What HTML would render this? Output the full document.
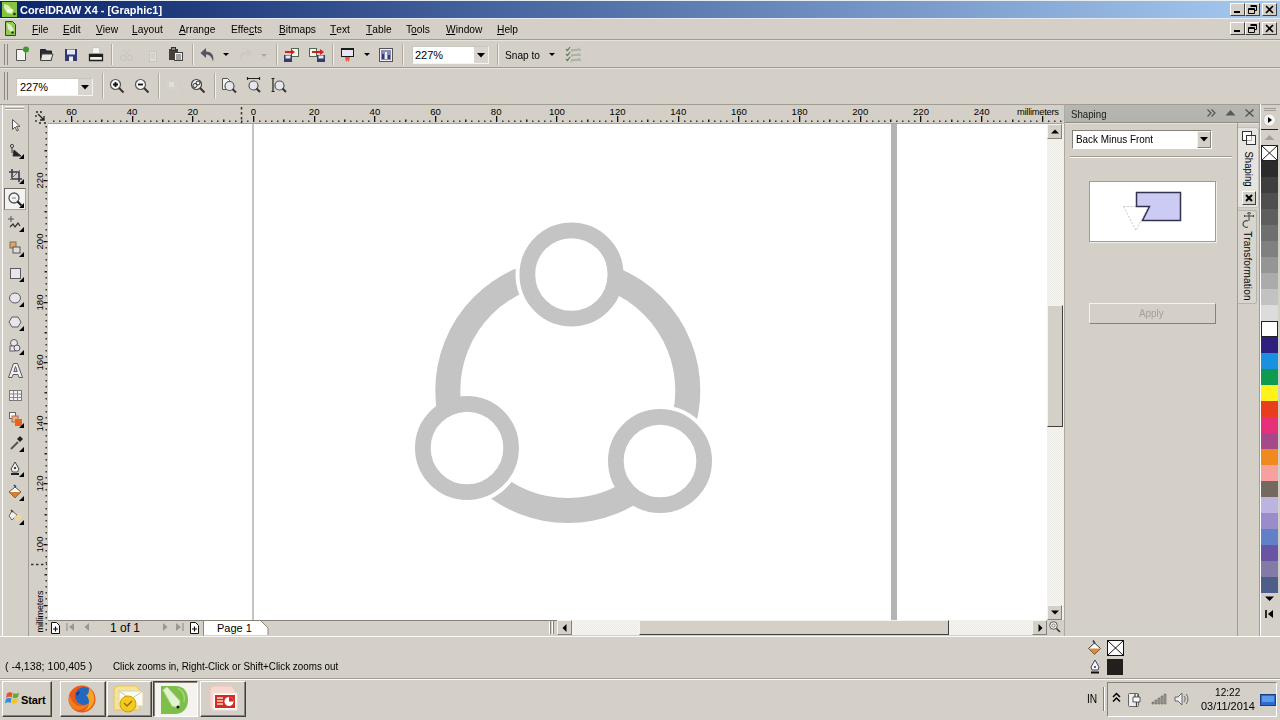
<!DOCTYPE html>
<html><head><meta charset="utf-8">
<style>
*{margin:0;padding:0;box-sizing:border-box}
html,body{width:1280px;height:720px;overflow:hidden;background:#d4d0c8;font-family:"Liberation Sans",sans-serif;font-size:11px;color:#000}
.a{position:absolute}
.t{position:absolute;white-space:nowrap;font-size:11px;line-height:13px}
u{text-decoration:none;position:relative}
u:after{content:"";position:absolute;left:0;right:0;bottom:0px;height:1px;background:#000}
.sep{position:absolute;width:2px;border-left:1px solid #aeaaa2;border-right:1px solid #f2f0eb}
.grip{position:absolute;width:4px;border-left:1px solid #8a877f;border-right:1px solid #8a877f}
svg{position:absolute;overflow:visible}
.hl{position:absolute;left:0;width:1280px;height:1px}
</style></head><body>
<!-- ===== title bar ===== -->
<div class="hl" style="top:0;background:#e6eef2"></div>
<div class="a" style="left:0;top:1px;width:1280px;height:17px;background:linear-gradient(90deg,#0a246a 0%,#a6caf0 100%)"></div>
<svg style="left:1px;top:1px" width="17" height="17" viewBox="0 0 17 17"><rect x="0.5" y="0.5" width="16" height="16" fill="#86c43e" stroke="#1e3318"/><path d="M3 3l4 1 5 5-1 4-5-1-3-5z" fill="#d6eeb0"/><path d="M6 9c2 1 4 1 6 0" stroke="#f4faea" stroke-width="2.5" fill="none"/><circle cx="13.5" cy="13" r="1.3" fill="#1e3318"/></svg>
<div class="t" style="left:20px;top:3px;font-weight:bold;color:#fff;font-size:11.5px;line-height:15px;transform-origin:0 0;transform:scaleX(0.95)">CorelDRAW X4 - [Graphic1]</div>
<!-- title buttons -->
<div class="a" style="left:1230px;top:3px;width:15px;height:13px;background:#d4d0c8;border:1px solid;border-color:#fff #404040 #404040 #fff"></div>
<div class="a" style="left:1245px;top:3px;width:15px;height:13px;background:#d4d0c8;border:1px solid;border-color:#fff #404040 #404040 #fff"></div>
<div class="a" style="left:1262px;top:3px;width:15px;height:13px;background:#d4d0c8;border:1px solid;border-color:#fff #404040 #404040 #fff"></div>
<div class="a" style="left:1234px;top:11px;width:6px;height:2px;background:#000"></div>
<svg style="left:1245px;top:3px" width="15" height="13"><path d="M5.5 2.5h6v5h-2M5.5 3.5h6M3.5 5.5h6v5h-6z M3.5 6.5h6" fill="none" stroke="#000"/></svg>
<svg style="left:1262px;top:3px" width="15" height="13"><path d="M4 3L11 10M11 3L4 10" stroke="#000" stroke-width="1.6"/></svg>
<!-- ===== menu ===== -->
<div class="hl" style="top:18px;background:#e8e8f2"></div>
<svg style="left:4px;top:20px" width="13" height="17" viewBox="0 0 13 17"><path d="M1.5 1.5h7l3 3v11h-10z" fill="#94c856" stroke="#2e4a1e"/><path d="M3 3l4 2 3 5-2 3-4-4z" fill="#dcefc0"/><circle cx="8.5" cy="12.5" r="1.2" fill="#1e2e14"/></svg>
<div class="t" style="left:32px;top:23px;transform-origin:0 0;transform:scaleX(0.93)"><u>F</u>ile</div>
<div class="t" style="left:63px;top:23px;transform-origin:0 0;transform:scaleX(0.93)"><u>E</u>dit</div>
<div class="t" style="left:96px;top:23px;transform-origin:0 0;transform:scaleX(0.93)"><u>V</u>iew</div>
<div class="t" style="left:132px;top:23px;transform-origin:0 0;transform:scaleX(0.93)"><u>L</u>ayout</div>
<div class="t" style="left:179px;top:23px;transform-origin:0 0;transform:scaleX(0.93)"><u>A</u>rrange</div>
<div class="t" style="left:231px;top:23px;transform-origin:0 0;transform:scaleX(0.93)">Effe<u>c</u>ts</div>
<div class="t" style="left:279px;top:23px;transform-origin:0 0;transform:scaleX(0.93)"><u>B</u>itmaps</div>
<div class="t" style="left:330px;top:23px;transform-origin:0 0;transform:scaleX(0.93)"><u>T</u>ext</div>
<div class="t" style="left:366px;top:23px;transform-origin:0 0;transform:scaleX(0.93)"><u>T</u>able</div>
<div class="t" style="left:406px;top:23px;transform-origin:0 0;transform:scaleX(0.93)">T<u>o</u>ols</div>
<div class="t" style="left:446px;top:23px;transform-origin:0 0;transform:scaleX(0.93)"><u>W</u>indow</div>
<div class="t" style="left:497px;top:23px;transform-origin:0 0;transform:scaleX(0.93)"><u>H</u>elp</div>
<!-- mdi buttons -->
<div class="a" style="left:1230px;top:22px;width:15px;height:13px;background:#d4d0c8;border:1px solid;border-color:#fff #404040 #404040 #fff"></div>
<div class="a" style="left:1245px;top:22px;width:15px;height:13px;background:#d4d0c8;border:1px solid;border-color:#fff #404040 #404040 #fff"></div>
<div class="a" style="left:1262px;top:22px;width:15px;height:13px;background:#d4d0c8;border:1px solid;border-color:#fff #404040 #404040 #fff"></div>
<div class="a" style="left:1234px;top:30px;width:6px;height:2px;background:#000"></div>
<svg style="left:1245px;top:22px" width="15" height="13"><path d="M5.5 2.5h6v5h-2M5.5 3.5h6M3.5 5.5h6v5h-6z M3.5 6.5h6" fill="none" stroke="#000"/></svg>
<svg style="left:1262px;top:22px" width="15" height="13"><path d="M4 3L11 10M11 3L4 10" stroke="#000" stroke-width="1.6"/></svg>
<div class="hl" style="top:39px;background:#a19d95"></div>
<div class="hl" style="top:40px;background:#e6e3dd"></div>
<!-- ===== toolbar 1 ===== -->
<div class="grip" style="left:4px;top:44px;height:21px"></div>
<!-- new -->
<svg style="left:15px;top:46px" width="16" height="16" viewBox="0 0 16 16"><path d="M1.5 3.5h6l3 3v8h-9z" fill="#f4f4f0" stroke="#555"/><circle cx="11" cy="3.5" r="3" fill="#3d9a2c"/></svg>
<!-- open -->
<svg style="left:39px;top:46px" width="16" height="16" viewBox="0 0 16 16"><path d="M1.5 3.5h5l1 1.5h5v9h-11z" fill="#2b2e3a" stroke="#222"/><path d="M3 8h11l-2 6.5H1.5z" fill="#e9e7e0" stroke="#444"/></svg>
<!-- save -->
<svg style="left:64px;top:47px" width="16" height="16" viewBox="0 0 16 16"><rect x="1" y="2" width="12" height="12" fill="#323a73"/><rect x="3" y="2.5" width="8" height="5" fill="#e8e8f4"/><rect x="5" y="9.5" width="4" height="4.5" fill="#eee"/></svg>
<!-- print -->
<svg style="left:88px;top:46px" width="16" height="16" viewBox="0 0 16 16"><rect x="4.5" y="1.5" width="7" height="6" fill="#f4f4ee" stroke="#c9c9c0"/><path d="M1.5 8.5h13v6h-13z" fill="#f2f0e6" stroke="#1e1e1e" stroke-width="1.3"/><rect x="2" y="9" width="12" height="2" fill="#1e1e1e"/></svg>
<div class="sep" style="left:111px;top:44px;height:21px"></div>
<!-- cut disabled -->
<svg style="left:119px;top:47px" width="16" height="16" viewBox="0 0 16 16"><circle cx="4" cy="11" r="2.5" fill="none" stroke="#c8c5bd" stroke-width="1.2"/><circle cx="11" cy="11" r="2.5" fill="none" stroke="#c8c5bd" stroke-width="1.2"/><path d="M5 9L11 2M10 9L4 2" stroke="#c8c5bd"/></svg>
<!-- copy disabled -->
<svg style="left:145px;top:47px" width="16" height="16" viewBox="0 0 16 16"><rect x="4.5" y="4.5" width="7" height="10" fill="#e0ddd6" stroke="#c8c5bd"/><path d="M6 7h4M6 9h4M6 11h4" stroke="#c8c5bd"/></svg>
<!-- paste -->
<svg style="left:168px;top:46px" width="16" height="16" viewBox="0 0 16 16"><rect x="1" y="3" width="9" height="11" fill="#4a3f34"/><rect x="3.5" y="1.5" width="4" height="3" fill="#8d8173" stroke="#333"/><rect x="6.5" y="6.5" width="8" height="8" fill="#f4f4ef" stroke="#444"/><path d="M8 9h5M8 11h5M8 13h5" stroke="#555"/></svg>
<div class="sep" style="left:192px;top:44px;height:21px"></div>
<!-- undo -->
<svg style="left:199px;top:46px" width="17" height="17" viewBox="0 0 17 17"><path d="M14 15.5C15.5 10 13 5.5 7 5.5V2L1.5 7 7 12V8.5c3.5 0 5.5 2 7 7z" fill="#55555f"/></svg>
<svg style="left:223px;top:53px" width="6" height="4"><path d="M0 0h6L3 3z" fill="#000"/></svg>
<!-- redo disabled -->
<svg style="left:237px;top:46px" width="17" height="17" viewBox="0 0 17 17"><path d="M3 15.5C1.5 10 4 5.5 10 5.5V2l5.5 5L10 12V8.5c-3.5 0-5.5 2-7 7z" fill="#cdcac2"/></svg>
<svg style="left:261px;top:54px" width="6" height="4"><path d="M0 0h6L3 3z" fill="#aaa69e"/></svg>
<div class="sep" style="left:276px;top:44px;height:21px"></div>
<!-- import -->
<svg style="left:283px;top:47px" width="18" height="16" viewBox="0 0 18 16"><rect x="8.5" y="1.5" width="7" height="8" fill="#f5f5f0" stroke="#4d6a4d"/><path d="M2 5h8" stroke="#d81e1e" stroke-width="2"/><path d="M8 2l4 3-4 3z" fill="#d81e1e"/><rect x="1" y="8" width="8" height="7" fill="#363b6e"/><rect x="2.5" y="8.5" width="5" height="3" fill="#e6e6f0"/></svg>
<!-- export -->
<svg style="left:308px;top:47px" width="18" height="16" viewBox="0 0 18 16"><rect x="1.5" y="1.5" width="7" height="8" fill="#f5f5f0" stroke="#4d6a4d"/><path d="M4 5h8" stroke="#d81e1e" stroke-width="2"/><path d="M12 2l4 3-4 3z" fill="#d81e1e"/><rect x="9" y="8" width="8" height="7" fill="#363b6e"/><rect x="10.5" y="8.5" width="5" height="3" fill="#e6e6f0"/></svg>
<div class="sep" style="left:332px;top:44px;height:21px"></div>
<!-- publish pdf -->
<svg style="left:340px;top:46px" width="16" height="17" viewBox="0 0 16 17"><rect x="1" y="2" width="13" height="9" fill="#1a1a1a"/><rect x="2" y="4" width="11" height="6" fill="#e8e6f4"/><path d="M5 11h5l-1 5-1.5-2L6 16z" fill="#f05a3c"/></svg>
<svg style="left:364px;top:53px" width="6" height="4"><path d="M0 0h6L3 3z" fill="#000"/></svg>
<!-- app launcher -->
<svg style="left:378px;top:47px" width="16" height="16" viewBox="0 0 16 16"><rect x="1.5" y="1.5" width="13" height="13" fill="#f0eff5" stroke="#555"/><rect x="3" y="3" width="10" height="10" fill="#8a8cb8"/><rect x="4" y="7" width="2" height="5" fill="#333a70"/><rect x="7" y="5" width="2" height="7" fill="#eee"/><rect x="10" y="8" width="2" height="4" fill="#333a70"/></svg>
<div class="sep" style="left:402px;top:44px;height:21px"></div>
<!-- zoom combo -->
<div class="a" style="left:412px;top:46px;width:77px;height:18px;background:#fff;border:1px solid;border-color:#c9c6be #f4f3ef #f4f3ef #c9c6be"></div>
<div class="a" style="left:474px;top:47px;width:14px;height:16px;background:#d8d5ce"></div>
<svg style="left:477px;top:53px" width="8" height="5"><path d="M0 0h8L4 4.5z" fill="#000"/></svg>
<div class="t" style="left:415px;top:49px;font-size:11px">227%</div>
<div class="sep" style="left:497px;top:44px;height:21px"></div>
<div class="t" style="left:505px;top:49px;transform-origin:0 0;transform:scaleX(0.92)">Snap to</div>
<svg style="left:549px;top:53px" width="6" height="4"><path d="M0 0h6L3 3z" fill="#000"/></svg>
<svg style="left:565px;top:46px" width="17" height="17" viewBox="0 0 17 17"><path d="M1 3l1.5 1.5L5 1M1 8l1.5 1.5L5 6M1 13l1.5 1.5L5 11" fill="none" stroke="#5d7a5d" stroke-width="1.2"/><path d="M6 4h10M6 9h10M6 14h10" stroke="#8a9a8a" stroke-width="1"/><path d="M5 6l10-4M5 11l10-4M5 16l10-4" stroke="#a7b3a7" stroke-width="0.8"/></svg>
<div class="hl" style="top:67px;background:#a19d95"></div>
<div class="hl" style="top:68px;background:#e6e3dd"></div>
<!-- ===== toolbar 2 ===== -->
<div class="grip" style="left:4px;top:72px;height:28px"></div>
<div class="a" style="left:16px;top:78px;width:77px;height:18px;background:#fff;border:1px solid;border-color:#c9c6be #f4f3ef #f4f3ef #c9c6be"></div>
<div class="a" style="left:78px;top:79px;width:14px;height:16px;background:#d8d5ce"></div>
<svg style="left:81px;top:85px" width="8" height="5"><path d="M0 0h8L4 4.5z" fill="#000"/></svg>
<div class="t" style="left:20px;top:81px;font-size:11px">227%</div>
<div class="sep" style="left:102px;top:73px;height:26px"></div>
<!-- zoom in -->
<svg style="left:109px;top:78px" width="16" height="16" viewBox="0 0 16 16"><circle cx="6.5" cy="6.5" r="5" fill="#f6f6f6" stroke="#555" stroke-width="1.2"/><path d="M4 6.5h5M6.5 4v5" stroke="#111" stroke-width="1.8"/><path d="M10 10l4.5 4.5" stroke="#333" stroke-width="2"/></svg>
<svg style="left:134px;top:78px" width="16" height="16" viewBox="0 0 16 16"><circle cx="6.5" cy="6.5" r="5" fill="#f6f6f6" stroke="#555" stroke-width="1.2"/><path d="M4 6.5h5" stroke="#111" stroke-width="1.8"/><path d="M10 10l4.5 4.5" stroke="#333" stroke-width="2"/></svg>
<div class="sep" style="left:158px;top:73px;height:26px"></div>
<svg style="left:165px;top:78px" width="16" height="16" viewBox="0 0 16 16"><circle cx="6.5" cy="6.5" r="5" fill="none" stroke="#d6d3cc" stroke-width="1.2"/><rect x="4" y="4" width="5" height="5" fill="#e2dfd8"/><path d="M10 10l4.5 4.5" stroke="#d6d3cc" stroke-width="2"/></svg>
<svg style="left:190px;top:78px" width="16" height="16" viewBox="0 0 16 16"><circle cx="6.5" cy="6.5" r="5" fill="#f2f2f2" stroke="#444" stroke-width="1.2"/><circle cx="5" cy="7.5" r="2" fill="none" stroke="#333"/><circle cx="8" cy="5" r="2" fill="none" stroke="#333"/><path d="M10 10l4.5 4.5" stroke="#333" stroke-width="2"/></svg>
<div class="sep" style="left:214px;top:73px;height:26px"></div>
<svg style="left:221px;top:77px" width="16" height="17" viewBox="0 0 16 17"><path d="M1.5 1.5h5l2 2v9h-7z" fill="#f4f4f0" stroke="#555"/><circle cx="8.5" cy="9" r="4.5" fill="#e6e6ee" stroke="#555" stroke-width="1.2"/><path d="M11.5 12l3.5 3.5" stroke="#333" stroke-width="2"/></svg>
<svg style="left:246px;top:77px" width="16" height="17" viewBox="0 0 16 17"><path d="M1 1.5h13M1.5 0v3M13.5 0v3" stroke="#222" stroke-width="1.2"/><circle cx="7.5" cy="8.5" r="4.5" fill="#e6e6ee" stroke="#555" stroke-width="1.2"/><path d="M10.5 11.5l3.5 3.5" stroke="#333" stroke-width="2"/></svg>
<svg style="left:271px;top:77px" width="16" height="17" viewBox="0 0 16 17"><path d="M2 1v14M0.5 1.5h3M0.5 14.5h3" stroke="#222" stroke-width="1.2"/><circle cx="8.5" cy="8.5" r="4.5" fill="#e6e6ee" stroke="#555" stroke-width="1.2"/><path d="M11.5 11.5l3.5 3.5" stroke="#333" stroke-width="2"/></svg>
<div class="hl" style="top:104px;background:#a19d95"></div>
<!-- ===== toolbox ===== -->
<div class="a" style="left:2px;top:105px;width:1px;height:531px;background:#fff"></div>
<div class="a" style="left:28px;top:105px;width:1px;height:531px;background:#a19d95"></div>
<div class="a" style="left:5px;top:106px;width:19px;height:1px;background:#f4f3ef"></div>
<div class="a" style="left:5px;top:108px;width:19px;height:1px;background:#a19d95"></div>
<div class="a" style="left:5px;top:109px;width:19px;height:1px;background:#f4f3ef"></div>
<svg style="left:7px;top:117px" width="17" height="17" viewBox="0 0 17 17"><path d="M5.5 2.5v10l2.5-2.5 2 4 1.5-.7-2-4H13z" fill="#fafafa" stroke="#555"/></svg>
<svg style="left:7px;top:142px" width="17" height="17" viewBox="0 0 17 17"><circle cx="5" cy="4" r="1.6" fill="none" stroke="#444"/><path d="M5 6v5M7 8l7 6H6z" stroke="#333" fill="#222"/></svg>
<svg style="left:19px;top:154px" width="5" height="5"><path d="M5 0v5H0z" fill="#000"/></svg>
<svg style="left:7px;top:167px" width="17" height="17" viewBox="0 0 17 17"><path d="M5 2v10h10M2 5h10v10" stroke="#3c3c4c" stroke-width="1.6" fill="none"/><path d="M3 13L13 3" stroke="#6a6a80"/></svg>
<svg style="left:19px;top:179px" width="5" height="5"><path d="M5 0v5H0z" fill="#000"/></svg>
<div class="a" style="left:4px;top:188px;width:22px;height:22px;background:#f4f3f0;border:1px solid;border-color:#6d6a63 #a9a69e #a9a69e #6d6a63"></div>
<svg style="left:7px;top:191px" width="17" height="17" viewBox="0 0 17 17"><circle cx="7" cy="7" r="5" fill="#f4f4f8" stroke="#555" stroke-width="1.3"/><path d="M5 7h4" stroke="#9aa" stroke-width="1.5"/><path d="M10.5 10.5l4 4" stroke="#222" stroke-width="2.2"/></svg>
<svg style="left:19px;top:203px" width="5" height="5"><path d="M5 0v5H0z" fill="#000"/></svg>
<svg style="left:7px;top:215px" width="17" height="17" viewBox="0 0 17 17"><path d="M4 1v6M1 4h6" stroke="#555"/><path d="M3 12l3-3 2 3 3-4 2 3" stroke="#333" stroke-width="1.3" fill="none"/></svg>
<svg style="left:19px;top:227px" width="5" height="5"><path d="M5 0v5H0z" fill="#000"/></svg>
<svg style="left:7px;top:240px" width="17" height="17" viewBox="0 0 17 17"><rect x="3" y="2" width="6" height="6" fill="#e9a070" stroke="#774"/><rect x="6" y="7" width="7" height="6" fill="#ddd" stroke="#555"/></svg>
<svg style="left:19px;top:252px" width="5" height="5"><path d="M5 0v5H0z" fill="#000"/></svg>
<svg style="left:7px;top:265px" width="17" height="17" viewBox="0 0 17 17"><rect x="3.5" y="3.5" width="10" height="10" fill="#e6e6ec" stroke="#5c5c60"/></svg>
<svg style="left:19px;top:277px" width="5" height="5"><path d="M5 0v5H0z" fill="#000"/></svg>
<svg style="left:7px;top:290px" width="17" height="17" viewBox="0 0 17 17"><ellipse cx="8" cy="8" rx="5.5" ry="5" fill="#e6e6ec" stroke="#5c5c60"/></svg>
<svg style="left:19px;top:302px" width="5" height="5"><path d="M5 0v5H0z" fill="#000"/></svg>
<svg style="left:7px;top:314px" width="17" height="17" viewBox="0 0 17 17"><path d="M5 3h6l3 5-3 5H5L2 8z" fill="#e6e6ec" stroke="#5c5c60"/></svg>
<svg style="left:19px;top:326px" width="5" height="5"><path d="M5 0v5H0z" fill="#000"/></svg>
<svg style="left:7px;top:338px" width="17" height="17" viewBox="0 0 17 17"><circle cx="7" cy="5" r="3.5" fill="#e6e6ec" stroke="#5c5c60"/><rect x="3" y="8" width="5" height="5" fill="#e6e6ec" stroke="#5c5c60"/><circle cx="10" cy="10" r="3" fill="#e6e6ec" stroke="#5c5c60"/></svg>
<svg style="left:19px;top:350px" width="5" height="5"><path d="M5 0v5H0z" fill="#000"/></svg>
<svg style="left:7px;top:362px" width="17" height="17" viewBox="0 0 17 17"><path d="M1.5 15.5L6.5 1.5h4l5 14h-3.5l-1-3h-5l-1 3zM6.8 9.5h3.4L8.5 4.5z" fill="#f2f2f4" stroke="#5a5a60" stroke-width="1" fill-rule="evenodd"/></svg>
<svg style="left:7px;top:387px" width="17" height="17" viewBox="0 0 17 17"><rect x="2.5" y="3.5" width="12" height="10" fill="#f4f4f8" stroke="#777"/><path d="M2.5 7h12M2.5 10.5h12M6.5 3.5v10M10.5 3.5v10" stroke="#888"/></svg>
<svg style="left:7px;top:411px" width="17" height="17" viewBox="0 0 17 17"><rect x="2.5" y="1.5" width="6" height="6" fill="#fff" stroke="#666"/><rect x="5" y="5" width="6" height="6" fill="#f0b070" stroke="#a66"/><rect x="8" y="8" width="7" height="7" fill="#e8641e"/></svg>
<svg style="left:19px;top:423px" width="5" height="5"><path d="M5 0v5H0z" fill="#000"/></svg>
<svg style="left:7px;top:435px" width="17" height="17" viewBox="0 0 17 17"><path d="M4 14l7-7" stroke="#555" stroke-width="2"/><path d="M10 4l3-3 3 3-3 3z" fill="#222"/></svg>
<svg style="left:19px;top:447px" width="5" height="5"><path d="M5 0v5H0z" fill="#000"/></svg>
<svg style="left:7px;top:460px" width="17" height="17" viewBox="0 0 17 17"><path d="M8 2l4 7-1.5 3h-5L4 9z" fill="#f2f2f8" stroke="#444"/><circle cx="8" cy="8" r="1.2" fill="#444"/><path d="M4 14h8" stroke="#222" stroke-width="2"/></svg>
<svg style="left:19px;top:472px" width="5" height="5"><path d="M5 0v5H0z" fill="#000"/></svg>
<svg style="left:7px;top:484px" width="17" height="17" viewBox="0 0 17 17"><path d="M8 3l6 5-6 6-6-6z" fill="#fff" stroke="#555"/><path d="M2 8h12l-6 6z" fill="#d77f2a"/><path d="M7 1l2 2" stroke="#335" stroke-width="1.5"/></svg>
<svg style="left:19px;top:496px" width="5" height="5"><path d="M5 0v5H0z" fill="#000"/></svg>
<svg style="left:7px;top:508px" width="17" height="17" viewBox="0 0 17 17"><path d="M5 3l5 4-5 5-3-4z" fill="#f0f0f0" stroke="#666"/><path d="M7 9l6-4 2 5-6 4z" fill="#e8d7a0"/><path d="M4 2l2 2" stroke="#533" stroke-width="1.5"/></svg>
<svg style="left:19px;top:520px" width="5" height="5"><path d="M5 0v5H0z" fill="#000"/></svg>
<!-- ===== rulers ===== -->
<svg style="left:0;top:104px" width="1064" height="21"><rect x="53" y="16.5" width="1.5" height="1.5" fill="#333"/><rect x="59" y="16.5" width="1.5" height="1.5" fill="#333"/><rect x="65" y="16.5" width="1.5" height="1.5" fill="#333"/><rect x="71" y="12" width="1.3" height="6" fill="#111"/><rect x="77" y="16.5" width="1.5" height="1.5" fill="#333"/><rect x="83" y="16.5" width="1.5" height="1.5" fill="#333"/><rect x="89" y="16.5" width="1.5" height="1.5" fill="#333"/><rect x="95" y="16.5" width="1.5" height="1.5" fill="#333"/><rect x="101" y="15.5" width="1.5" height="2.5" fill="#222"/><rect x="107" y="16.5" width="1.5" height="1.5" fill="#333"/><rect x="113" y="16.5" width="1.5" height="1.5" fill="#333"/><rect x="120" y="16.5" width="1.5" height="1.5" fill="#333"/><rect x="126" y="16.5" width="1.5" height="1.5" fill="#333"/><rect x="132" y="12" width="1.3" height="6" fill="#111"/><rect x="138" y="16.5" width="1.5" height="1.5" fill="#333"/><rect x="144" y="16.5" width="1.5" height="1.5" fill="#333"/><rect x="150" y="16.5" width="1.5" height="1.5" fill="#333"/><rect x="156" y="16.5" width="1.5" height="1.5" fill="#333"/><rect x="162" y="15.5" width="1.5" height="2.5" fill="#222"/><rect x="168" y="16.5" width="1.5" height="1.5" fill="#333"/><rect x="174" y="16.5" width="1.5" height="1.5" fill="#333"/><rect x="180" y="16.5" width="1.5" height="1.5" fill="#333"/><rect x="186" y="16.5" width="1.5" height="1.5" fill="#333"/><rect x="192" y="12" width="1.3" height="6" fill="#111"/><rect x="198" y="16.5" width="1.5" height="1.5" fill="#333"/><rect x="204" y="16.5" width="1.5" height="1.5" fill="#333"/><rect x="211" y="16.5" width="1.5" height="1.5" fill="#333"/><rect x="217" y="16.5" width="1.5" height="1.5" fill="#333"/><rect x="223" y="15.5" width="1.5" height="2.5" fill="#222"/><rect x="229" y="16.5" width="1.5" height="1.5" fill="#333"/><rect x="235" y="16.5" width="1.5" height="1.5" fill="#333"/><rect x="241" y="16.5" width="1.5" height="1.5" fill="#333"/><rect x="247" y="16.5" width="1.5" height="1.5" fill="#333"/><rect x="253" y="12" width="1.3" height="6" fill="#111"/><rect x="259" y="16.5" width="1.5" height="1.5" fill="#333"/><rect x="265" y="16.5" width="1.5" height="1.5" fill="#333"/><rect x="271" y="16.5" width="1.5" height="1.5" fill="#333"/><rect x="277" y="16.5" width="1.5" height="1.5" fill="#333"/><rect x="283" y="15.5" width="1.5" height="2.5" fill="#222"/><rect x="289" y="16.5" width="1.5" height="1.5" fill="#333"/><rect x="295" y="16.5" width="1.5" height="1.5" fill="#333"/><rect x="302" y="16.5" width="1.5" height="1.5" fill="#333"/><rect x="308" y="16.5" width="1.5" height="1.5" fill="#333"/><rect x="314" y="12" width="1.3" height="6" fill="#111"/><rect x="320" y="16.5" width="1.5" height="1.5" fill="#333"/><rect x="326" y="16.5" width="1.5" height="1.5" fill="#333"/><rect x="332" y="16.5" width="1.5" height="1.5" fill="#333"/><rect x="338" y="16.5" width="1.5" height="1.5" fill="#333"/><rect x="344" y="15.5" width="1.5" height="2.5" fill="#222"/><rect x="350" y="16.5" width="1.5" height="1.5" fill="#333"/><rect x="356" y="16.5" width="1.5" height="1.5" fill="#333"/><rect x="362" y="16.5" width="1.5" height="1.5" fill="#333"/><rect x="368" y="16.5" width="1.5" height="1.5" fill="#333"/><rect x="374" y="12" width="1.3" height="6" fill="#111"/><rect x="380" y="16.5" width="1.5" height="1.5" fill="#333"/><rect x="386" y="16.5" width="1.5" height="1.5" fill="#333"/><rect x="393" y="16.5" width="1.5" height="1.5" fill="#333"/><rect x="399" y="16.5" width="1.5" height="1.5" fill="#333"/><rect x="405" y="15.5" width="1.5" height="2.5" fill="#222"/><rect x="411" y="16.5" width="1.5" height="1.5" fill="#333"/><rect x="417" y="16.5" width="1.5" height="1.5" fill="#333"/><rect x="423" y="16.5" width="1.5" height="1.5" fill="#333"/><rect x="429" y="16.5" width="1.5" height="1.5" fill="#333"/><rect x="435" y="12" width="1.3" height="6" fill="#111"/><rect x="441" y="16.5" width="1.5" height="1.5" fill="#333"/><rect x="447" y="16.5" width="1.5" height="1.5" fill="#333"/><rect x="453" y="16.5" width="1.5" height="1.5" fill="#333"/><rect x="459" y="16.5" width="1.5" height="1.5" fill="#333"/><rect x="465" y="15.5" width="1.5" height="2.5" fill="#222"/><rect x="471" y="16.5" width="1.5" height="1.5" fill="#333"/><rect x="478" y="16.5" width="1.5" height="1.5" fill="#333"/><rect x="484" y="16.5" width="1.5" height="1.5" fill="#333"/><rect x="490" y="16.5" width="1.5" height="1.5" fill="#333"/><rect x="496" y="12" width="1.3" height="6" fill="#111"/><rect x="502" y="16.5" width="1.5" height="1.5" fill="#333"/><rect x="508" y="16.5" width="1.5" height="1.5" fill="#333"/><rect x="514" y="16.5" width="1.5" height="1.5" fill="#333"/><rect x="520" y="16.5" width="1.5" height="1.5" fill="#333"/><rect x="526" y="15.5" width="1.5" height="2.5" fill="#222"/><rect x="532" y="16.5" width="1.5" height="1.5" fill="#333"/><rect x="538" y="16.5" width="1.5" height="1.5" fill="#333"/><rect x="544" y="16.5" width="1.5" height="1.5" fill="#333"/><rect x="550" y="16.5" width="1.5" height="1.5" fill="#333"/><rect x="556" y="12" width="1.3" height="6" fill="#111"/><rect x="562" y="16.5" width="1.5" height="1.5" fill="#333"/><rect x="569" y="16.5" width="1.5" height="1.5" fill="#333"/><rect x="575" y="16.5" width="1.5" height="1.5" fill="#333"/><rect x="581" y="16.5" width="1.5" height="1.5" fill="#333"/><rect x="587" y="15.5" width="1.5" height="2.5" fill="#222"/><rect x="593" y="16.5" width="1.5" height="1.5" fill="#333"/><rect x="599" y="16.5" width="1.5" height="1.5" fill="#333"/><rect x="605" y="16.5" width="1.5" height="1.5" fill="#333"/><rect x="611" y="16.5" width="1.5" height="1.5" fill="#333"/><rect x="617" y="12" width="1.3" height="6" fill="#111"/><rect x="623" y="16.5" width="1.5" height="1.5" fill="#333"/><rect x="629" y="16.5" width="1.5" height="1.5" fill="#333"/><rect x="635" y="16.5" width="1.5" height="1.5" fill="#333"/><rect x="641" y="16.5" width="1.5" height="1.5" fill="#333"/><rect x="647" y="15.5" width="1.5" height="2.5" fill="#222"/><rect x="653" y="16.5" width="1.5" height="1.5" fill="#333"/><rect x="660" y="16.5" width="1.5" height="1.5" fill="#333"/><rect x="666" y="16.5" width="1.5" height="1.5" fill="#333"/><rect x="672" y="16.5" width="1.5" height="1.5" fill="#333"/><rect x="678" y="12" width="1.3" height="6" fill="#111"/><rect x="684" y="16.5" width="1.5" height="1.5" fill="#333"/><rect x="690" y="16.5" width="1.5" height="1.5" fill="#333"/><rect x="696" y="16.5" width="1.5" height="1.5" fill="#333"/><rect x="702" y="16.5" width="1.5" height="1.5" fill="#333"/><rect x="708" y="15.5" width="1.5" height="2.5" fill="#222"/><rect x="714" y="16.5" width="1.5" height="1.5" fill="#333"/><rect x="720" y="16.5" width="1.5" height="1.5" fill="#333"/><rect x="726" y="16.5" width="1.5" height="1.5" fill="#333"/><rect x="732" y="16.5" width="1.5" height="1.5" fill="#333"/><rect x="738" y="12" width="1.3" height="6" fill="#111"/><rect x="745" y="16.5" width="1.5" height="1.5" fill="#333"/><rect x="751" y="16.5" width="1.5" height="1.5" fill="#333"/><rect x="757" y="16.5" width="1.5" height="1.5" fill="#333"/><rect x="763" y="16.5" width="1.5" height="1.5" fill="#333"/><rect x="769" y="15.5" width="1.5" height="2.5" fill="#222"/><rect x="775" y="16.5" width="1.5" height="1.5" fill="#333"/><rect x="781" y="16.5" width="1.5" height="1.5" fill="#333"/><rect x="787" y="16.5" width="1.5" height="1.5" fill="#333"/><rect x="793" y="16.5" width="1.5" height="1.5" fill="#333"/><rect x="799" y="12" width="1.3" height="6" fill="#111"/><rect x="805" y="16.5" width="1.5" height="1.5" fill="#333"/><rect x="811" y="16.5" width="1.5" height="1.5" fill="#333"/><rect x="817" y="16.5" width="1.5" height="1.5" fill="#333"/><rect x="823" y="16.5" width="1.5" height="1.5" fill="#333"/><rect x="829" y="15.5" width="1.5" height="2.5" fill="#222"/><rect x="836" y="16.5" width="1.5" height="1.5" fill="#333"/><rect x="842" y="16.5" width="1.5" height="1.5" fill="#333"/><rect x="848" y="16.5" width="1.5" height="1.5" fill="#333"/><rect x="854" y="16.5" width="1.5" height="1.5" fill="#333"/><rect x="860" y="12" width="1.3" height="6" fill="#111"/><rect x="866" y="16.5" width="1.5" height="1.5" fill="#333"/><rect x="872" y="16.5" width="1.5" height="1.5" fill="#333"/><rect x="878" y="16.5" width="1.5" height="1.5" fill="#333"/><rect x="884" y="16.5" width="1.5" height="1.5" fill="#333"/><rect x="890" y="15.5" width="1.5" height="2.5" fill="#222"/><rect x="896" y="16.5" width="1.5" height="1.5" fill="#333"/><rect x="902" y="16.5" width="1.5" height="1.5" fill="#333"/><rect x="908" y="16.5" width="1.5" height="1.5" fill="#333"/><rect x="914" y="16.5" width="1.5" height="1.5" fill="#333"/><rect x="920" y="12" width="1.3" height="6" fill="#111"/><rect x="927" y="16.5" width="1.5" height="1.5" fill="#333"/><rect x="933" y="16.5" width="1.5" height="1.5" fill="#333"/><rect x="939" y="16.5" width="1.5" height="1.5" fill="#333"/><rect x="945" y="16.5" width="1.5" height="1.5" fill="#333"/><rect x="951" y="15.5" width="1.5" height="2.5" fill="#222"/><rect x="957" y="16.5" width="1.5" height="1.5" fill="#333"/><rect x="963" y="16.5" width="1.5" height="1.5" fill="#333"/><rect x="969" y="16.5" width="1.5" height="1.5" fill="#333"/><rect x="975" y="16.5" width="1.5" height="1.5" fill="#333"/><rect x="981" y="12" width="1.3" height="6" fill="#111"/><rect x="987" y="16.5" width="1.5" height="1.5" fill="#333"/><rect x="993" y="16.5" width="1.5" height="1.5" fill="#333"/><rect x="999" y="16.5" width="1.5" height="1.5" fill="#333"/><rect x="1005" y="16.5" width="1.5" height="1.5" fill="#333"/><rect x="1012" y="15.5" width="1.5" height="2.5" fill="#222"/><rect x="1018" y="16.5" width="1.5" height="1.5" fill="#333"/><rect x="1024" y="16.5" width="1.5" height="1.5" fill="#333"/><rect x="1030" y="16.5" width="1.5" height="1.5" fill="#333"/><rect x="1036" y="16.5" width="1.5" height="1.5" fill="#333"/><rect x="1042" y="12" width="1.3" height="6" fill="#111"/><rect x="1048" y="16.5" width="1.5" height="1.5" fill="#333"/><rect x="1054" y="16.5" width="1.5" height="1.5" fill="#333"/><rect x="1060" y="16.5" width="1.5" height="1.5" fill="#333"/></svg>
<div class="t" style="left:51.5px;top:106px;width:40px;text-align:center;font-size:9.6px;line-height:11px">60</div>
<div class="t" style="left:112.1px;top:106px;width:40px;text-align:center;font-size:9.6px;line-height:11px">40</div>
<div class="t" style="left:172.8px;top:106px;width:40px;text-align:center;font-size:9.6px;line-height:11px">20</div>
<div class="t" style="left:233.5px;top:106px;width:40px;text-align:center;font-size:9.6px;line-height:11px">0</div>
<div class="t" style="left:294.2px;top:106px;width:40px;text-align:center;font-size:9.6px;line-height:11px">20</div>
<div class="t" style="left:354.9px;top:106px;width:40px;text-align:center;font-size:9.6px;line-height:11px">40</div>
<div class="t" style="left:415.5px;top:106px;width:40px;text-align:center;font-size:9.6px;line-height:11px">60</div>
<div class="t" style="left:476.2px;top:106px;width:40px;text-align:center;font-size:9.6px;line-height:11px">80</div>
<div class="t" style="left:536.9px;top:106px;width:40px;text-align:center;font-size:9.6px;line-height:11px">100</div>
<div class="t" style="left:597.6px;top:106px;width:40px;text-align:center;font-size:9.6px;line-height:11px">120</div>
<div class="t" style="left:658.3px;top:106px;width:40px;text-align:center;font-size:9.6px;line-height:11px">140</div>
<div class="t" style="left:718.9px;top:106px;width:40px;text-align:center;font-size:9.6px;line-height:11px">160</div>
<div class="t" style="left:779.6px;top:106px;width:40px;text-align:center;font-size:9.6px;line-height:11px">180</div>
<div class="t" style="left:840.3px;top:106px;width:40px;text-align:center;font-size:9.6px;line-height:11px">200</div>
<div class="t" style="left:901.0px;top:106px;width:40px;text-align:center;font-size:9.6px;line-height:11px">220</div>
<div class="t" style="left:961.7px;top:106px;width:40px;text-align:center;font-size:9.6px;line-height:11px">240</div>
<div class="t" style="left:1017px;top:107px;font-size:9.3px;line-height:11px;letter-spacing:-0.25px">millimeters</div>
<svg style="left:0;top:0" width="50" height="640"><rect x="45.5" y="629" width="1.5" height="1.5" fill="#333"/><rect x="45.5" y="623" width="1.5" height="1.5" fill="#333"/><rect x="45.5" y="617" width="1.5" height="1.5" fill="#333"/><rect x="45.5" y="611" width="1.5" height="1.5" fill="#333"/><rect x="43.5" y="605" width="4" height="1.3" fill="#111"/><rect x="45.5" y="598" width="1.5" height="1.5" fill="#333"/><rect x="45.5" y="592" width="1.5" height="1.5" fill="#333"/><rect x="45.5" y="586" width="1.5" height="1.5" fill="#333"/><rect x="45.5" y="580" width="1.5" height="1.5" fill="#333"/><rect x="44.5" y="574" width="2.5" height="1.5" fill="#222"/><rect x="45.5" y="568" width="1.5" height="1.5" fill="#333"/><rect x="45.5" y="562" width="1.5" height="1.5" fill="#333"/><rect x="45.5" y="556" width="1.5" height="1.5" fill="#333"/><rect x="45.5" y="550" width="1.5" height="1.5" fill="#333"/><rect x="43.5" y="544" width="4" height="1.3" fill="#111"/><rect x="45.5" y="538" width="1.5" height="1.5" fill="#333"/><rect x="45.5" y="532" width="1.5" height="1.5" fill="#333"/><rect x="45.5" y="526" width="1.5" height="1.5" fill="#333"/><rect x="45.5" y="520" width="1.5" height="1.5" fill="#333"/><rect x="44.5" y="514" width="2.5" height="1.5" fill="#222"/><rect x="45.5" y="508" width="1.5" height="1.5" fill="#333"/><rect x="45.5" y="501" width="1.5" height="1.5" fill="#333"/><rect x="45.5" y="495" width="1.5" height="1.5" fill="#333"/><rect x="45.5" y="489" width="1.5" height="1.5" fill="#333"/><rect x="43.5" y="483" width="4" height="1.3" fill="#111"/><rect x="45.5" y="477" width="1.5" height="1.5" fill="#333"/><rect x="45.5" y="471" width="1.5" height="1.5" fill="#333"/><rect x="45.5" y="465" width="1.5" height="1.5" fill="#333"/><rect x="45.5" y="459" width="1.5" height="1.5" fill="#333"/><rect x="44.5" y="453" width="2.5" height="1.5" fill="#222"/><rect x="45.5" y="447" width="1.5" height="1.5" fill="#333"/><rect x="45.5" y="441" width="1.5" height="1.5" fill="#333"/><rect x="45.5" y="435" width="1.5" height="1.5" fill="#333"/><rect x="45.5" y="429" width="1.5" height="1.5" fill="#333"/><rect x="43.5" y="423" width="4" height="1.3" fill="#111"/><rect x="45.5" y="417" width="1.5" height="1.5" fill="#333"/><rect x="45.5" y="411" width="1.5" height="1.5" fill="#333"/><rect x="45.5" y="405" width="1.5" height="1.5" fill="#333"/><rect x="45.5" y="398" width="1.5" height="1.5" fill="#333"/><rect x="44.5" y="392" width="2.5" height="1.5" fill="#222"/><rect x="45.5" y="386" width="1.5" height="1.5" fill="#333"/><rect x="45.5" y="380" width="1.5" height="1.5" fill="#333"/><rect x="45.5" y="374" width="1.5" height="1.5" fill="#333"/><rect x="45.5" y="368" width="1.5" height="1.5" fill="#333"/><rect x="43.5" y="362" width="4" height="1.3" fill="#111"/><rect x="45.5" y="356" width="1.5" height="1.5" fill="#333"/><rect x="45.5" y="350" width="1.5" height="1.5" fill="#333"/><rect x="45.5" y="344" width="1.5" height="1.5" fill="#333"/><rect x="45.5" y="338" width="1.5" height="1.5" fill="#333"/><rect x="44.5" y="332" width="2.5" height="1.5" fill="#222"/><rect x="45.5" y="326" width="1.5" height="1.5" fill="#333"/><rect x="45.5" y="320" width="1.5" height="1.5" fill="#333"/><rect x="45.5" y="314" width="1.5" height="1.5" fill="#333"/><rect x="45.5" y="308" width="1.5" height="1.5" fill="#333"/><rect x="43.5" y="302" width="4" height="1.3" fill="#111"/><rect x="45.5" y="295" width="1.5" height="1.5" fill="#333"/><rect x="45.5" y="289" width="1.5" height="1.5" fill="#333"/><rect x="45.5" y="283" width="1.5" height="1.5" fill="#333"/><rect x="45.5" y="277" width="1.5" height="1.5" fill="#333"/><rect x="44.5" y="271" width="2.5" height="1.5" fill="#222"/><rect x="45.5" y="265" width="1.5" height="1.5" fill="#333"/><rect x="45.5" y="259" width="1.5" height="1.5" fill="#333"/><rect x="45.5" y="253" width="1.5" height="1.5" fill="#333"/><rect x="45.5" y="247" width="1.5" height="1.5" fill="#333"/><rect x="43.5" y="241" width="4" height="1.3" fill="#111"/><rect x="45.5" y="235" width="1.5" height="1.5" fill="#333"/><rect x="45.5" y="229" width="1.5" height="1.5" fill="#333"/><rect x="45.5" y="223" width="1.5" height="1.5" fill="#333"/><rect x="45.5" y="217" width="1.5" height="1.5" fill="#333"/><rect x="44.5" y="211" width="2.5" height="1.5" fill="#222"/><rect x="45.5" y="205" width="1.5" height="1.5" fill="#333"/><rect x="45.5" y="198" width="1.5" height="1.5" fill="#333"/><rect x="45.5" y="192" width="1.5" height="1.5" fill="#333"/><rect x="45.5" y="186" width="1.5" height="1.5" fill="#333"/><rect x="43.5" y="180" width="4" height="1.3" fill="#111"/><rect x="45.5" y="174" width="1.5" height="1.5" fill="#333"/><rect x="45.5" y="168" width="1.5" height="1.5" fill="#333"/><rect x="45.5" y="162" width="1.5" height="1.5" fill="#333"/><rect x="45.5" y="156" width="1.5" height="1.5" fill="#333"/><rect x="44.5" y="150" width="2.5" height="1.5" fill="#222"/><rect x="45.5" y="144" width="1.5" height="1.5" fill="#333"/><rect x="45.5" y="138" width="1.5" height="1.5" fill="#333"/><rect x="45.5" y="132" width="1.5" height="1.5" fill="#333"/><rect x="45.5" y="126" width="1.5" height="1.5" fill="#333"/></svg>
<div class="t" style="left:19px;top:538.9px;width:40px;text-align:center;font-size:9.6px;line-height:11px;transform:rotate(-90deg)">100</div>
<div class="t" style="left:19px;top:478.3px;width:40px;text-align:center;font-size:9.6px;line-height:11px;transform:rotate(-90deg)">120</div>
<div class="t" style="left:19px;top:417.7px;width:40px;text-align:center;font-size:9.6px;line-height:11px;transform:rotate(-90deg)">140</div>
<div class="t" style="left:19px;top:357.1px;width:40px;text-align:center;font-size:9.6px;line-height:11px;transform:rotate(-90deg)">160</div>
<div class="t" style="left:19px;top:296.5px;width:40px;text-align:center;font-size:9.6px;line-height:11px;transform:rotate(-90deg)">180</div>
<div class="t" style="left:19px;top:235.9px;width:40px;text-align:center;font-size:9.6px;line-height:11px;transform:rotate(-90deg)">200</div>
<div class="t" style="left:19px;top:175.3px;width:40px;text-align:center;font-size:9.6px;line-height:11px;transform:rotate(-90deg)">220</div>
<div class="t" style="left:9.5px;top:606px;width:60px;text-align:center;font-size:9px;line-height:11px;letter-spacing:-0.1px;transform:rotate(-90deg)">millimeters</div>
<svg style="left:35px;top:111px" width="12" height="13"><path d="M1 1h2M5 1h2M1 4v2M1 9v2M4 12h2M9 12h2" stroke="#222" stroke-width="1.3"/><path d="M3 3l6 6M9 5v4H5" stroke="#222" stroke-width="1.3" fill="none"/></svg>
<div class="a" style="left:48px;top:123px;width:1014px;height:1px;background:#a5a198"></div>
<div class="a" style="left:48px;top:123px;width:1px;height:512px;background:#a5a198"></div>
<svg style="left:240px;top:107px" width="3" height="17"><path d="M1.5 0v16" stroke="#333" stroke-width="1.5" stroke-dasharray="2.5 2.5"/></svg>
<svg style="left:31px;top:563px" width="17" height="3"><path d="M0 1.5h16" stroke="#333" stroke-width="1.5" stroke-dasharray="2.5 2.5"/></svg>
<!-- ===== canvas ===== -->
<div class="a" style="left:48px;top:124px;width:999px;height:496px;background:#fff"></div>
<div class="a" style="left:252px;top:124px;width:2px;height:496px;background:#c4c4c4"></div>
<div class="a" style="left:891px;top:124px;width:6px;height:496px;background:#b4b4b4"></div>
<svg style="left:0;top:0" width="1280" height="720"><defs><mask id="m" maskUnits="userSpaceOnUse" x="0" y="0" width="1280" height="720"><rect width="1280" height="720" fill="#fff"/><polygon points="573.29,218.53 568.89,218.56 564.51,218.94 560.17,219.66 555.90,220.72 551.73,222.11 547.68,223.82 543.78,225.84 540.05,228.17 536.51,230.78 533.18,233.66 530.10,236.79 527.27,240.16 524.71,243.73 522.44,247.50 520.47,251.43 518.82,255.51 517.49,259.70 516.50,263.98 515.84,268.33 515.53,272.71 515.56,277.11 515.94,281.49 516.66,285.83 517.72,290.10 519.11,294.27 520.82,298.32 522.84,302.22 525.17,305.95 527.78,309.49 530.66,312.82 533.79,315.90 537.16,318.73 540.73,321.29 544.50,323.56 548.43,325.53 552.51,327.18 556.70,328.51 560.98,329.50 565.33,330.16 569.71,330.47" fill="#000"/><polygon points="704.49,495.02 707.02,491.42 709.26,487.64 711.20,483.69 712.82,479.60 714.12,475.40 715.08,471.11 715.70,466.76 715.98,462.37 715.92,457.97 715.51,453.60 714.76,449.26 713.67,445.00 712.25,440.84 710.50,436.81 708.45,432.92 706.10,429.20 703.46,425.68 700.56,422.38 697.40,419.32 694.02,416.51 690.42,413.98 686.64,411.74 682.69,409.80 678.60,408.18 674.40,406.88 670.11,405.92 665.76,405.30 661.37,405.02 656.97,405.08 652.60,405.49 648.26,406.24 644.00,407.33 639.84,408.75 635.81,410.50 631.92,412.55 628.20,414.90 624.68,417.54 621.38,420.44 618.32,423.60 615.51,426.98" fill="#000"/><polygon points="418.36,475.75 420.68,479.48 423.30,483.02 426.18,486.34 429.31,489.42 432.68,492.25 436.26,494.81 440.02,497.07 443.96,499.04 448.03,500.69 452.23,502.02 456.51,503.01 460.86,503.66 465.24,503.97 469.64,503.94 474.02,503.56 478.36,502.84 482.63,501.78 486.80,500.38 490.85,498.67 494.75,496.64 498.48,494.32 502.02,491.70 505.34,488.82 508.42,485.69 511.25,482.32 513.81,478.74 516.07,474.98 518.04,471.04 519.69,466.97 521.02,462.77 522.01,458.49 522.66,454.14 522.97,449.76 522.94,445.36 522.56,440.98 521.84,436.64 520.78,432.37 519.38,428.20 517.67,424.15 515.64,420.25" fill="#000"/></mask></defs><circle cx="567.8" cy="390.5" r="120" fill="none" stroke="#c4c4c4" stroke-width="25" mask="url(#m)"/><circle cx="571.5" cy="274.5" r="36.3" fill="#fff"/><circle cx="571.5" cy="274.5" r="44.15" fill="none" stroke="#c4c4c4" stroke-width="15.7"/><circle cx="660" cy="461" r="36.3" fill="#fff"/><circle cx="660" cy="461" r="44.15" fill="none" stroke="#c4c4c4" stroke-width="15.7"/><circle cx="467" cy="448" r="36.3" fill="#fff"/><circle cx="467" cy="448" r="44.15" fill="none" stroke="#c4c4c4" stroke-width="15.7"/></svg>
<div class="a" style="left:1047px;top:124px;width:17px;height:496px;background:repeating-conic-gradient(#ecebe6 0 25%,#f6f5f2 0 50%) 0 0/2px 2px"></div>
<div class="a" style="left:1047px;top:124px;width:15px;height:15px;background:#d4d0c8;border:1px solid;border-color:#f4f3ee #85827a #85827a #f4f3ee"></div>
<svg style="left:1051px;top:129px" width="8" height="5"><path d="M0 4.5h8L4 0.5z" fill="#000"/></svg>
<div class="a" style="left:1047px;top:305px;width:16px;height:122px;background:#d4d0c8;border:1px solid;border-color:#f4f3ee #404040 #404040 #f4f3ee"></div>
<div class="a" style="left:1047px;top:605px;width:15px;height:15px;background:#d4d0c8;border:1px solid;border-color:#f4f3ee #85827a #85827a #f4f3ee"></div>
<svg style="left:1051px;top:610px" width="8" height="5"><path d="M0 0.5h8L4 4.5z" fill="#000"/></svg>
<div class="a" style="left:48px;top:620px;width:1014px;height:15px;background:#d4d0c8"></div>
<div class="a" style="left:48px;top:620px;width:509px;height:1px;background:#85827a"></div>
<div class="a" style="left:572px;top:620px;width:475px;height:15px;background:repeating-conic-gradient(#ecebe6 0 25%,#f6f5f2 0 50%) 0 0/2px 2px"></div>
<div class="a" style="left:557px;top:620px;width:15px;height:15px;background:#d4d0c8;border:1px solid;border-color:#f4f3ee #85827a #85827a #f4f3ee"></div>
<svg style="left:562px;top:624px" width="5" height="8"><path d="M4.5 0v8L0.5 4z" fill="#000"/></svg>
<div class="a" style="left:639px;top:620px;width:310px;height:15px;background:#d4d0c8;border:1px solid;border-color:#f4f3ee #404040 #404040 #f4f3ee"></div>
<div class="a" style="left:1032px;top:620px;width:15px;height:15px;background:#d4d0c8;border:1px solid;border-color:#f4f3ee #85827a #85827a #f4f3ee"></div>
<svg style="left:1038px;top:624px" width="5" height="8"><path d="M0.5 0v8L4.5 4z" fill="#000"/></svg>
<div class="a" style="left:1047px;top:620px;width:15px;height:15px;background:#d4d0c8"></div>
<svg style="left:1047px;top:620px" width="15" height="15"><circle cx="6.5" cy="5.5" r="3.8" fill="#f6f6f8" stroke="#555"/><circle cx="6.5" cy="5.5" r="1.6" fill="none" stroke="#777"/><path d="M9.5 8.5l3.5 3.5" stroke="#333" stroke-width="1.5"/></svg>
<div class="a" style="left:549px;top:621px;width:2px;height:13px;border-left:1px solid #fff;border-right:1px solid #85827a"></div>
<div class="a" style="left:552px;top:621px;width:2px;height:13px;border-left:1px solid #fff;border-right:1px solid #85827a"></div>
<svg style="left:50px;top:621px" width="11" height="13"><path d="M1.5 1.5h5l3 3v8h-8z" fill="#fff" stroke="#111"/><path d="M3 8h5M5.5 5.5v5" stroke="#111" stroke-width="1.2"/></svg>
<svg style="left:66px;top:622px" width="9" height="10"><path d="M1 1v8" stroke="#999" stroke-width="1.3"/><path d="M8 1v8L3 5z" fill="#9a978f"/></svg>
<svg style="left:83px;top:622px" width="7" height="10"><path d="M6 1v8L1.5 5z" fill="#9a978f"/></svg>
<div class="t" style="left:110px;top:621px;font-size:12px;line-height:14px">1 of 1</div>
<svg style="left:162px;top:622px" width="7" height="10"><path d="M1 1v8L5.5 5z" fill="#9a978f"/></svg>
<svg style="left:175px;top:622px" width="9" height="10"><path d="M1 1v8L6 5z" fill="#9a978f"/><path d="M8 1v8" stroke="#999" stroke-width="1.3"/></svg>
<svg style="left:189px;top:621px" width="11" height="13"><path d="M1.5 1.5h5l3 3v8h-8z" fill="#fff" stroke="#111"/><path d="M3 8h5M5.5 5.5v5" stroke="#111" stroke-width="1.2"/></svg>
<svg style="left:202px;top:620px" width="70" height="16"><path d="M1 1H59L66 8V15H1z" fill="#fff"/><path d="M1.5 1V15.5M59 1L66 8V15" fill="none" stroke="#8a877f"/><path d="M0 0.5H70" stroke="#85827a"/></svg>
<div class="t" style="left:217px;top:622px;font-size:11px;line-height:13px">Page 1</div>
<!-- ===== docker ===== -->
<div class="a" style="left:1064px;top:104px;width:1px;height:532px;background:#aeaaa2"></div>
<div class="a" style="left:1065px;top:105px;width:194px;height:18px;background:linear-gradient(#b7b6b1,#b2b3ad);border-bottom:1px solid #8f8d87;box-shadow:0 1px 0 #e4e2dc"></div>
<div class="t" style="left:1071px;top:107px;font-size:11px;line-height:14px;color:#1a1a1a;transform-origin:0 0;transform:scaleX(0.88)">Shaping</div>
<svg style="left:1206px;top:108px" width="12" height="10"><path d="M1.5 1.5l3.5 3.5-3.5 3.5M5.5 1.5l3.5 3.5-3.5 3.5" fill="none" stroke="#55534e" stroke-width="1.2"/></svg>
<svg style="left:1225px;top:109px" width="11" height="7"><path d="M0.5 6.5h10L5.5 1z" fill="#5a5853"/></svg>
<svg style="left:1244px;top:108px" width="11" height="10"><path d="M1.5 1.5l8 7M9.5 1.5l-8 7" stroke="#55534e" stroke-width="1.4"/></svg>
<div class="a" style="left:1072px;top:130px;width:140px;height:19px;background:#fff;border:1px solid;border-color:#85827a #fff #fff #85827a"></div>
<div class="a" style="left:1197px;top:131px;width:14px;height:17px;background:#d4d0c8;border:1px solid;border-color:#f4f3ee #85827a #85827a #f4f3ee"></div>
<svg style="left:1200px;top:137px" width="8" height="5"><path d="M0 0h8L4 4.5z" fill="#000"/></svg>
<div class="t" style="left:1076px;top:133px;font-size:11px;line-height:13px;transform-origin:0 0;transform:scaleX(0.9)">Back Minus Front</div>
<div class="a" style="left:1070px;top:156px;width:162px;height:1px;background:#a19d95"></div>
<div class="a" style="left:1070px;top:157px;width:162px;height:1px;background:#fff"></div>
<div class="a" style="left:1089px;top:181px;width:127px;height:61px;background:#fff;border:1px solid #9f9c95;box-shadow:1px 1px 0 #f0eee9"></div>
<svg style="left:1089px;top:181px" width="127" height="61"><path d="M34.5 25.5h25l-12.5 24z" fill="none" stroke="#c8c8c8" stroke-dasharray="2 1.5"/><path d="M47.5 11.5h44v28h-38l7-14h-13z" fill="#cbcbf4" stroke="#333350" stroke-width="1.5"/></svg>
<div class="a" style="left:1089px;top:303px;width:127px;height:21px;background:#d4d0c8;border:1px solid;border-color:#f4f3ee #85827a #85827a #f4f3ee"></div>
<div class="t" style="left:1139px;top:307px;font-size:11px;line-height:13px;color:#a3a098;transform-origin:0 0;transform:scaleX(0.9)">Apply</div>
<div class="a" style="left:1237px;top:123px;width:1px;height:513px;background:#a19d95"></div>
<div class="a" style="left:1238px;top:127px;width:21px;height:81px;background:#e6e4df;border:1px solid #c4c1ba;border-left:none;border-radius:0 3px 3px 0"></div>
<svg style="left:1241px;top:130px" width="17" height="17"><rect x="1.5" y="1.5" width="9" height="9" fill="#fff" stroke="#333"/><rect x="5.5" y="5.5" width="9" height="9" fill="#fff" stroke="#333" fill-opacity="0.6"/></svg>
<div class="t" style="left:1225px;top:162px;width:48px;height:14px;text-align:center;font-size:11px;line-height:14px;transform:rotate(90deg) scaleX(0.87)">Shaping</div>
<div class="a" style="left:1242px;top:191px;width:14px;height:14px;background:#d4d0c8;border:1px solid;border-color:#fff #404040 #404040 #fff"></div>
<svg style="left:1242px;top:191px" width="14" height="14"><path d="M4 4l6 6M10 4l-6 6" stroke="#000" stroke-width="2"/></svg>
<div class="a" style="left:1238px;top:210px;width:19px;height:94px;background:#d8d5ce;border:1px solid #b7b4ad;border-left:none;border-radius:0 3px 3px 0"></div>
<svg style="left:1240px;top:212px" width="16" height="17"><path d="M9 1v8M5 4h8" stroke="#444" stroke-width="1"/><path d="M7 1.5l2-1 2 1M5 3l-1 1 1 1M13 3l1 1-1 1" fill="none" stroke="#444"/><path d="M8 9c-3-1-5 1-5 3s2 4 5 3" fill="none" stroke="#444" stroke-width="1.2"/></svg>
<div class="t" style="left:1206px;top:259px;width:84px;height:14px;text-align:center;font-size:10.5px;line-height:14px;letter-spacing:0.2px;transform:rotate(90deg) scaleX(0.95)">Transformation</div>
<div class="a" style="left:1259px;top:104px;width:1px;height:532px;background:#a19d95"></div>
<div class="a" style="left:1260px;top:104px;width:1px;height:532px;background:#fff"></div>
<div class="a" style="left:1264px;top:108px;width:12px;height:1px;background:#a19d95"></div>
<div class="a" style="left:1264px;top:110px;width:12px;height:1px;background:#a19d95"></div>
<svg style="left:1261px;top:112px" width="17" height="16"><circle cx="8.5" cy="8" r="6" fill="#f6f6f4" stroke="#c8c5bd"/><path d="M7 5v6l4-3z" fill="#000"/></svg>
<div class="a" style="left:1261px;top:129px;width:17px;height:1px;background:#222"></div>
<svg style="left:1264px;top:134px" width="11" height="7"><path d="M0.5 6h10L5.5 1z" fill="#a5a29a"/></svg>
<div class="a" style="left:1261px;top:145px;width:17px;height:16px;background:#fff;border:1px solid #222"></div>
<svg style="left:1261px;top:145px" width="17" height="16"><path d="M1 1l15 14M16 1L1 15" stroke="#222"/></svg>
<div class="a" style="left:1261px;top:161px;width:17px;height:16px;background:#2b2b2b"></div>
<div class="a" style="left:1261px;top:177px;width:17px;height:16px;background:#3e3e3e"></div>
<div class="a" style="left:1261px;top:193px;width:17px;height:16px;background:#4f4f4f"></div>
<div class="a" style="left:1261px;top:209px;width:17px;height:16px;background:#5e5e5e"></div>
<div class="a" style="left:1261px;top:225px;width:17px;height:16px;background:#6f6f6f"></div>
<div class="a" style="left:1261px;top:241px;width:17px;height:16px;background:#808080"></div>
<div class="a" style="left:1261px;top:257px;width:17px;height:16px;background:#959595"></div>
<div class="a" style="left:1261px;top:273px;width:17px;height:16px;background:#ababab"></div>
<div class="a" style="left:1261px;top:289px;width:17px;height:16px;background:#c2c2c2"></div>
<div class="a" style="left:1261px;top:305px;width:17px;height:16px;background:#dcdcdc"></div>
<div class="a" style="left:1261px;top:321px;width:17px;height:16px;background:#fff;border:1px solid #222"></div>
<div class="a" style="left:1261px;top:337px;width:17px;height:16px;background:#2f1f7e"></div>
<div class="a" style="left:1261px;top:353px;width:17px;height:16px;background:#1a90e0"></div>
<div class="a" style="left:1261px;top:369px;width:17px;height:16px;background:#0e9a50"></div>
<div class="a" style="left:1261px;top:385px;width:17px;height:16px;background:#fff21a"></div>
<div class="a" style="left:1261px;top:401px;width:17px;height:16px;background:#e93d1e"></div>
<div class="a" style="left:1261px;top:417px;width:17px;height:16px;background:#e6307a"></div>
<div class="a" style="left:1261px;top:433px;width:17px;height:16px;background:#a44a8a"></div>
<div class="a" style="left:1261px;top:449px;width:17px;height:16px;background:#f08a1e"></div>
<div class="a" style="left:1261px;top:465px;width:17px;height:16px;background:#f6a0a0"></div>
<div class="a" style="left:1261px;top:481px;width:17px;height:16px;background:#74695e"></div>
<div class="a" style="left:1261px;top:497px;width:17px;height:16px;background:#bcb4e0"></div>
<div class="a" style="left:1261px;top:513px;width:17px;height:16px;background:#9a8cc8"></div>
<div class="a" style="left:1261px;top:529px;width:17px;height:16px;background:#6080c8"></div>
<div class="a" style="left:1261px;top:545px;width:17px;height:16px;background:#6a54a4"></div>
<div class="a" style="left:1261px;top:561px;width:17px;height:16px;background:#847aa6"></div>
<div class="a" style="left:1261px;top:577px;width:17px;height:16px;background:#4e5e8a"></div>
<svg style="left:1265px;top:596px" width="9" height="6"><path d="M0 0.5h9L4.5 5z" fill="#000"/></svg>
<svg style="left:1265px;top:609px" width="9" height="10"><path d="M1 1v8" stroke="#000" stroke-width="1.6"/><path d="M8 1v8L3 5z" fill="#000"/></svg>
<!-- ===== status ===== -->
<div class="hl" style="top:636px;background:#fbfaf6"></div>
<div class="t" style="left:5px;top:660px;font-size:11px;transform-origin:0 0;transform:scaleX(0.965)">( -4,138; 100,405 )</div>
<div class="t" style="left:113px;top:660px;font-size:11px;transform-origin:0 0;transform:scaleX(0.893)">Click zooms in, Right-Click or Shift+Click zooms out</div>
<svg style="left:1086px;top:640px" width="17" height="17"><path d="M8.5 3l6 5.5-6 6-6-6z" fill="#fff" stroke="#333"/><path d="M2.5 8.5h12l-6 6z" fill="#d98c3a"/><path d="M7 0.5l2 3" stroke="#335" stroke-width="1.5"/></svg>
<div class="a" style="left:1107px;top:640px;width:17px;height:16px;background:#fff;border:1px solid #111"></div>
<svg style="left:1107px;top:640px" width="17" height="16"><path d="M1 1l15 14M16 1L1 15" stroke="#111"/></svg>
<svg style="left:1089px;top:659px" width="12" height="15"><path d="M6 1l4 7-1 3H3L2 8z" fill="#f4f4fa" stroke="#445"/><circle cx="6" cy="8" r="1" fill="#334"/><path d="M2 13.5h8" stroke="#111" stroke-width="2"/></svg>
<div class="a" style="left:1107px;top:659px;width:16px;height:16px;background:#231f1c"></div>
<!-- ===== taskbar ===== -->
<div class="hl" style="top:678px;background:#a19d95"></div>
<div class="hl" style="top:679px;background:#fbfaf6"></div>
<div class="a" style="left:2px;top:681px;width:50px;height:36px;background:#d4d0c8;border:1px solid;border-color:#fff #404040 #404040 #fff;box-shadow:inset -1px -1px 0 #85827a"></div>
<svg style="left:5px;top:690px" width="16" height="16"><path d="M2 3.5c2-1.5 4-1.5 5.5-.5L6.5 7.5C5 6.5 3 6.5 1 8z" fill="#e8532a"/><path d="M8.5 3c1.5 1 3.5 1 5.5-.5L13 7c-2 1.5-4 1.5-5.5.5z" fill="#5fae2e"/><path d="M1 9c2-1.5 4-1.5 5.5-.5L5.5 13C4 12 2 12 0 13.5z" fill="#2a8ee0"/><path d="M7.5 8.5c1.5 1 3.5 1 5.5-.5L12 12.5c-2 1.5-4 1.5-5.5.5z" fill="#f6c324"/></svg>
<div class="t" style="left:21px;top:693px;font-weight:bold;font-size:11px;line-height:14px;letter-spacing:-0.1px">Start</div>
<div class="a" style="left:60px;top:681px;width:46px;height:36px;background:#d4d0c8;border:1px solid;border-color:#fff #404040 #404040 #fff;box-shadow:inset -1px -1px 0 #85827a"></div>
<svg style="left:67px;top:684px" width="30" height="30"><circle cx="15" cy="15" r="13.5" fill="#e8591a"/><circle cx="17" cy="12" r="9" fill="#2268c0"/><path d="M22 4c4 3 6 8 5 13-1 5-5 9-10 10 3-2 5-5 5-9 0-3-1-5-3-7 2 0 3-2 3-7z" fill="#f5a524"/><path d="M3 11c1 6 5 11 11 11 3 0 6-1 8-3-2 4-6 7-11 7C6 26 2 21 2 15c0-1.5.3-3 1-4z" fill="#f07e1a"/><path d="M9 10c1-2 3-3 4-2-1 1-2 2-2 4z" fill="#3a2a6a"/></svg>
<div class="a" style="left:107px;top:681px;width:45px;height:36px;background:#d4d0c8;border:1px solid;border-color:#fff #404040 #404040 #fff;box-shadow:inset -1px -1px 0 #85827a"></div>
<svg style="left:110px;top:683px" width="36" height="32"><path d="M4 7Q4 3 8 3H26L30 7V27H4z" fill="#f4e49a" stroke="#e3c45a"/><path d="M9 8H33V23H9z" fill="#fbfaf0" stroke="#d8d2b8"/><path d="M9 8L21 16 33 8" fill="none" stroke="#cfc8a8"/><circle cx="18" cy="21" r="8" fill="#f4ca1e" stroke="#c99c12"/><path d="M14 20l3 3 5-5" fill="none" stroke="#9a7010" stroke-width="1.5"/></svg>
<div class="a" style="left:153px;top:681px;width:45px;height:36px;background:#f4f3f0;border:1px solid;border-color:#404040 #fff #fff #404040;box-shadow:inset 1px 1px 0 #85827a"></div>
<svg style="left:158px;top:683px" width="32" height="32"><path d="M3 3H17C26 3 30 9 30 17 30 25 25 31 17 31H3z" fill="#7dbf48"/><path d="M20 5c5 3 7 8 6 14M23 7c3 3 4 7 3 11" fill="none" stroke="#a6d878" stroke-width="1.2"/><path d="M5 7L9 4 22 18 21 25 14 23z" fill="#e4f2d4" stroke="#b8dc98"/><circle cx="20" cy="24" r="1.6" fill="#1a1a1a"/></svg>
<div class="a" style="left:200px;top:681px;width:46px;height:36px;background:#d4d0c8;border:1px solid;border-color:#fff #404040 #404040 #fff;box-shadow:inset -1px -1px 0 #85827a"></div>
<svg style="left:204px;top:683px" width="36" height="32"><path d="M6 7Q6 3 10 3H27L31 7V26H6z" fill="#f6d8ce" stroke="#f0c4b8"/><path d="M9 10H33V27H9z" fill="#fff" stroke="#f0e0dc"/><rect x="11" y="12" width="20" height="13" fill="#d42c22"/><path d="M13 15h6M13 18h6M13 21h6" stroke="#f8d8c8" stroke-width="1.3"/><circle cx="25" cy="18.5" r="4.5" fill="#fff"/><path d="M25 18.5V14a4.5 4.5 0 0 1 4.5 4.5z" fill="#d42c22"/></svg>
<div class="t" style="left:1087px;top:692px;font-size:12px;line-height:14px;transform-origin:0 0;transform:scaleX(0.85)">IN</div>
<div class="a" style="left:1103px;top:687px;width:2px;height:24px;border-left:1px solid #85827a;border-right:1px solid #fff"></div>
<div class="a" style="left:1107px;top:682px;width:170px;height:35px;border:1px solid;border-color:#85827a #fff #fff #85827a"></div>
<svg style="left:1112px;top:692px" width="9" height="11"><path d="M1 5l3.5-3.5L8 5M1 9.5l3.5-3.5L8 9.5" fill="none" stroke="#000" stroke-width="1.5"/></svg>
<svg style="left:1127px;top:691px" width="16" height="17"><rect x="1.5" y="2.5" width="10" height="13" rx="1" fill="#eee" stroke="#666"/><path d="M6 6h7v5h-7z" fill="#fff" stroke="#555"/><path d="M8 3v3M11 3v3M9.5 11v5" stroke="#444" stroke-width="1.2"/></svg>
<svg style="left:1151px;top:693px" width="16" height="12"><path d="M1 11h2v-2H1zM4 11h2V7H4zM7 11h2V5H7zM10 11h2V3h-2zM13 11h2V1h-2z" fill="#9d9a92" stroke="#6d6a64" stroke-width="0.6"/></svg>
<svg style="left:1173px;top:691px" width="16" height="16"><path d="M2 6h3l4-4v12l-4-4H2z" fill="#eee" stroke="#666"/><path d="M11 5c1.5 1.5 1.5 4.5 0 6M13 3c2.5 2.5 2.5 7.5 0 10" fill="none" stroke="#666"/></svg>
<div class="t" style="left:1215px;top:686px;font-size:11.5px;line-height:13px;transform-origin:0 0;transform:scaleX(0.88)">12:22</div>
<div class="t" style="left:1201px;top:700px;font-size:11.5px;line-height:13px;transform-origin:0 0;transform:scaleX(0.95)">03/11/2014</div>
<svg style="left:1260px;top:694px" width="16" height="13"><rect x="0.5" y="0.5" width="15" height="11" fill="#2e6ad0" stroke="#1a3e88"/><rect x="2" y="2" width="12" height="6" fill="#5a9ae8"/></svg>
</body></html>
